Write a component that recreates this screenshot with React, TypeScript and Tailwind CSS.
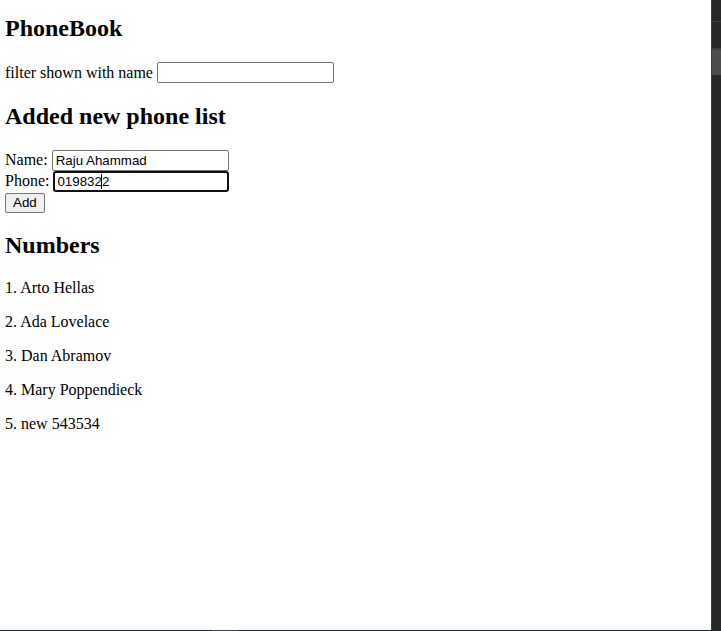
const people = ["Arto Hellas", "Ada Lovelace", "Dan Abramov", "Mary Poppendieck", "new 543534"];

function Field({ value }: { value: string }) {
  return (
    <div className="inline-flex h-[21px] w-[177px] items-center rounded-[2px] border border-[#767676] bg-white px-[3px] align-middle font-['Liberation_Sans',Arial,sans-serif] text-[13.33px] leading-none text-black">
      {value}
    </div>
  );
}

function Scrollbar() {
  return (
    <div className="flex w-[10px] shrink-0 flex-col border-l border-[#3e4045] bg-[#26282c]">
      <div className="h-[21px]" />
      <div className="h-px bg-[#3e4045]" />
      <div className="h-[26px]" />
      <div className="h-[2px] bg-[#3e4045]" />
      <div className="h-[25px] bg-[#4b4c4e]" />
      <div className="flex-1" />
    </div>
  );
}

export default function App() {
  return (
    <div className="flex h-[631px] w-[721px] flex-col overflow-hidden bg-white">
      <div className="flex min-h-0 flex-1">
        <main className="flex-1 pl-[5px] pt-[15px] font-['Liberation_Serif','Times_New_Roman',serif] text-[16px] leading-[normal] text-black">
          <h2 className="mb-[19.92px] text-[24px] font-bold leading-[normal]">PhoneBook</h2>
          <div className="flex h-[22px] items-center gap-[4px]">
            <span>filter shown with name</span>
            <Field value="" />
          </div>

          <h2 className="mt-[19px] mb-[20px] text-[24px] font-bold leading-[normal]">Added new phone list</h2>
          <form className="flex flex-col" onSubmit={(e) => e.preventDefault()}>
            <div className="flex h-[21px] items-center gap-[4px]">
              <span>Name:</span>
              <Field value="Raju Ahammad" />
            </div>
            <div className="flex h-[21px] items-center gap-[4px]">
              <span>Phone:</span>
              <div className="inline-flex h-[21px] w-[176px] items-center rounded-[3px] border-2 border-[#101010] bg-white px-[2px] font-['Liberation_Sans',Arial,sans-serif] text-[13.33px] leading-none">
                019832
                <span className="mx-[-0.5px] h-[15px] w-px bg-black" />
                2
              </div>
            </div>
            <div className="pt-px">
              <button
                type="submit"
                className="h-[20px] rounded-[2px] border border-[#767676] bg-[#efefef] px-[7px] font-['Liberation_Sans',Arial,sans-serif] text-[13.33px] leading-none text-black"
              >
                Add
              </button>
            </div>
          </form>

          <h2 className="mt-[19px] mb-[19.92px] text-[24px] font-bold leading-[normal]">Numbers</h2>
          {people.map((name, i) => (
            <p key={name} className="my-4">
              {i + 1}. {name}
            </p>
          ))}
        </main>
        <Scrollbar />
      </div>
      <div className="flex h-px bg-[#1c2a35]">
        <div className="w-[212px]" />
        <div className="w-[25px] bg-[#3a4a55]" />
      </div>
    </div>
  );
}
